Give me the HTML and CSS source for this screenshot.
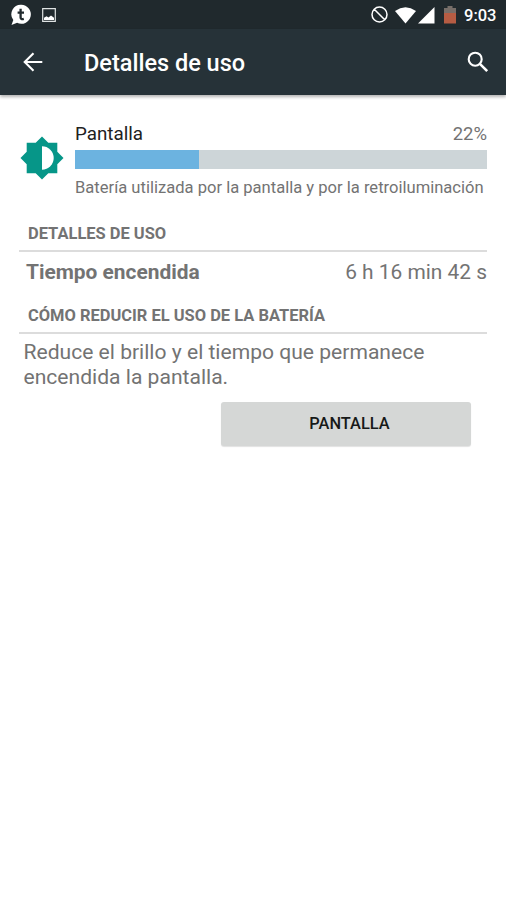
FILE: index.html
```html
<!DOCTYPE html>
<html lang="es">
<head>
<meta charset="utf-8">
<title>Detalles de uso</title>
<link rel="stylesheet" href="styles.css">
</head>
<body>
<div class="status">
  <svg class="chat" width="22" height="22" viewBox="0 0 22 22"><path d="M11.300.800a9.500 9.500 0 1 1-4.200 18L1.500 21l1.800-5A9.500 9.500 0 0 1 11.300.800z" fill="#fff"/><path d="M10.600 4.800v8.700q0 2.200 3.200 1.300M7.600 8.700h6.400" fill="none" stroke="#212a2e" stroke-width="2.300"/></svg>
  <svg class="photo" width="14" height="14" viewBox="0 0 14 14"><path d="M.7.7h12.600v12.600H.7z" fill="none" stroke="#dfe3e3" stroke-width="1.200"/><path d="M2 12v-2.200l2.500-1.600L6.500 9.500 9 7.500l3 2.300V12z" fill="#fff"/></svg>
  <span class="spacer"></span>
  <svg class="block" width="17" height="17" viewBox="0 0 17 17"><path d="M3 3l11 11M16 8.500a7.500 7.500 0 1 1-15 0a7.500 7.500 0 0 1 15 0z" fill="none" stroke="#fff" stroke-width="1.500"/></svg>
  <svg class="wifi" width="21" height="17" viewBox="0 0 21 17"><path d="M0 4Q10.500-3.400 21 4L10.500 16.500z" fill="#fff"/></svg>
  <svg class="signal" width="17" height="17" viewBox="0 0 17 17"><path d="M16.500 0v16.500H0z" fill="#fff"/></svg>
  <svg class="battery" width="12" height="18" viewBox="0 0 12 18"><path d="M3.500 0h5v2H12v6H0V2h3.500z" fill="#776e69"/><path d="M0 7h12v10.500H0z" fill="#b65c43"/></svg>
  <span class="clock">9:03</span>
</div>
<header class="bar">
  <svg class="back" width="20" height="20" viewBox="0 0 20 20"><path d="M19.300 10H2M10.500 1.200L1.700 10l8.800 8.800" fill="none" stroke="#fff" stroke-width="2.100"/></svg>
  <h1 class="title">Detalles de uso</h1>
  <svg class="search" width="22" height="22" viewBox="0 0 22 22"><circle cx="8.200" cy="8.200" r="6.500" fill="none" stroke="#fff" stroke-width="2.100"/><path d="M12.900 12.900l7.300 7.300" stroke="#fff" stroke-width="2.600"/></svg>
</header>
<main class="content">
  <section class="usage">
    <svg class="brightness" width="44" height="44" viewBox="0 0 44 44"><path d="M22 .5l6.300 6.200h9v9L43.500 22l-6.200 6.300v9h-9L22 43.500l-6.300-6.200h-9v-9L.5 22l6.200-6.300v-9h9z" fill="#069688"/><path d="M22 10.300a11.700 11.700 0 0 1 0 23.400z" fill="#fff"/></svg>
    <div class="info">
      <div class="row"><span class="name">Pantalla</span><span class="percent">22%</span></div>
      <div class="track"><div class="fill"></div></div>
      <p class="summary">Batería utilizada por la pantalla y por la retroiluminación</p>
    </div>
  </section>
  <h2 class="heading">DETALLES DE USO</h2>
  <div class="detail"><span class="label">Tiempo encendida</span><span class="value">6 h 16 min 42 s</span></div>
  <h2 class="heading">CÓMO REDUCIR EL USO DE LA BATERÍA</h2>
  <p class="advice">Reduce el brillo y el tiempo que permanece encendida la pantalla.</p>
  <button class="action">PANTALLA</button>
</main>
</body>
</html>
```

FILE: styles.css
```css
* { box-sizing: border-box; }
body { margin: 0; min-height: 900px; background: #fff; color: #737373; font-family: Roboto, sans-serif; }
h1, h2, p { margin: 0; }
svg { display: block; flex: none; }
.status { display: flex; align-items: center; height: 29px; padding: 1px 10px 0 10px; background: #20292d; }
.photo { margin-left: 10px; }
.spacer { flex: 1; }
.block { margin-bottom: 1px; }
.wifi { margin-left: 7px; }
.signal { margin-left: 2px; }
.battery { margin-left: 9px; margin-top: -1px; }
.clock { width: 32px; margin-left: 8px; padding-top: 2px; color: #fff; font-size: 16.500px; font-weight: 500; line-height: 26px; white-space: nowrap; }
.bar { display: flex; align-items: center; height: 66px; padding: 0 17px 0 23px; background: #263238; box-shadow: 0 2px 3px rgba(0, 0, 0, .3); }
.title { flex: 1; margin-left: 41px; color: #fff; font-size: 23.500px; font-weight: 500; line-height: 30px; padding-top: 1px; }
.content { display: flex; flex-direction: column; padding: 27px 19px 0; }
.usage { display: flex; height: 85px; }
.brightness { margin: 14px 11px 0 1px; }
.info { flex: 1; }
.row { display: flex; justify-content: space-between; height: 28px; padding-top: 1px; font-size: 18.800px; line-height: 23px; }
.percent { font-size: 18.500px; }
.name { color: #212121; }
.track { height: 19px; background: #cdd5d8; }
.fill { width: 30%; height: 100%; background: #6cb3e0; }
.summary { margin-top: 9px; font-size: 16.570px; line-height: 20px; white-space: nowrap; }
.heading { height: 45px; padding: 17px 9px 0; border-bottom: 2px solid #dcdcdc; font-size: 16.470px; line-height: 20px; font-weight: 700; }
.detail { display: flex; justify-content: space-between; height: 37px; padding: 6px 0 0 7px; font-size: 20.900px; line-height: 28px; }
.label { font-weight: 700; }
.advice { padding: 5px 4.500px 1px; font-size: 21.080px; line-height: 25px; }
.action { align-self: flex-end; width: 250px; height: 44px; margin: 11.500px 16px 0 0; padding: 0 0 0 7px; border: 0; border-radius: 3px; background: #d5d7d6; box-shadow: 0 1px 1px rgba(0, 0, 0, .12); color: #171918; font: 500 16.400px/43px Roboto, sans-serif; }
```
